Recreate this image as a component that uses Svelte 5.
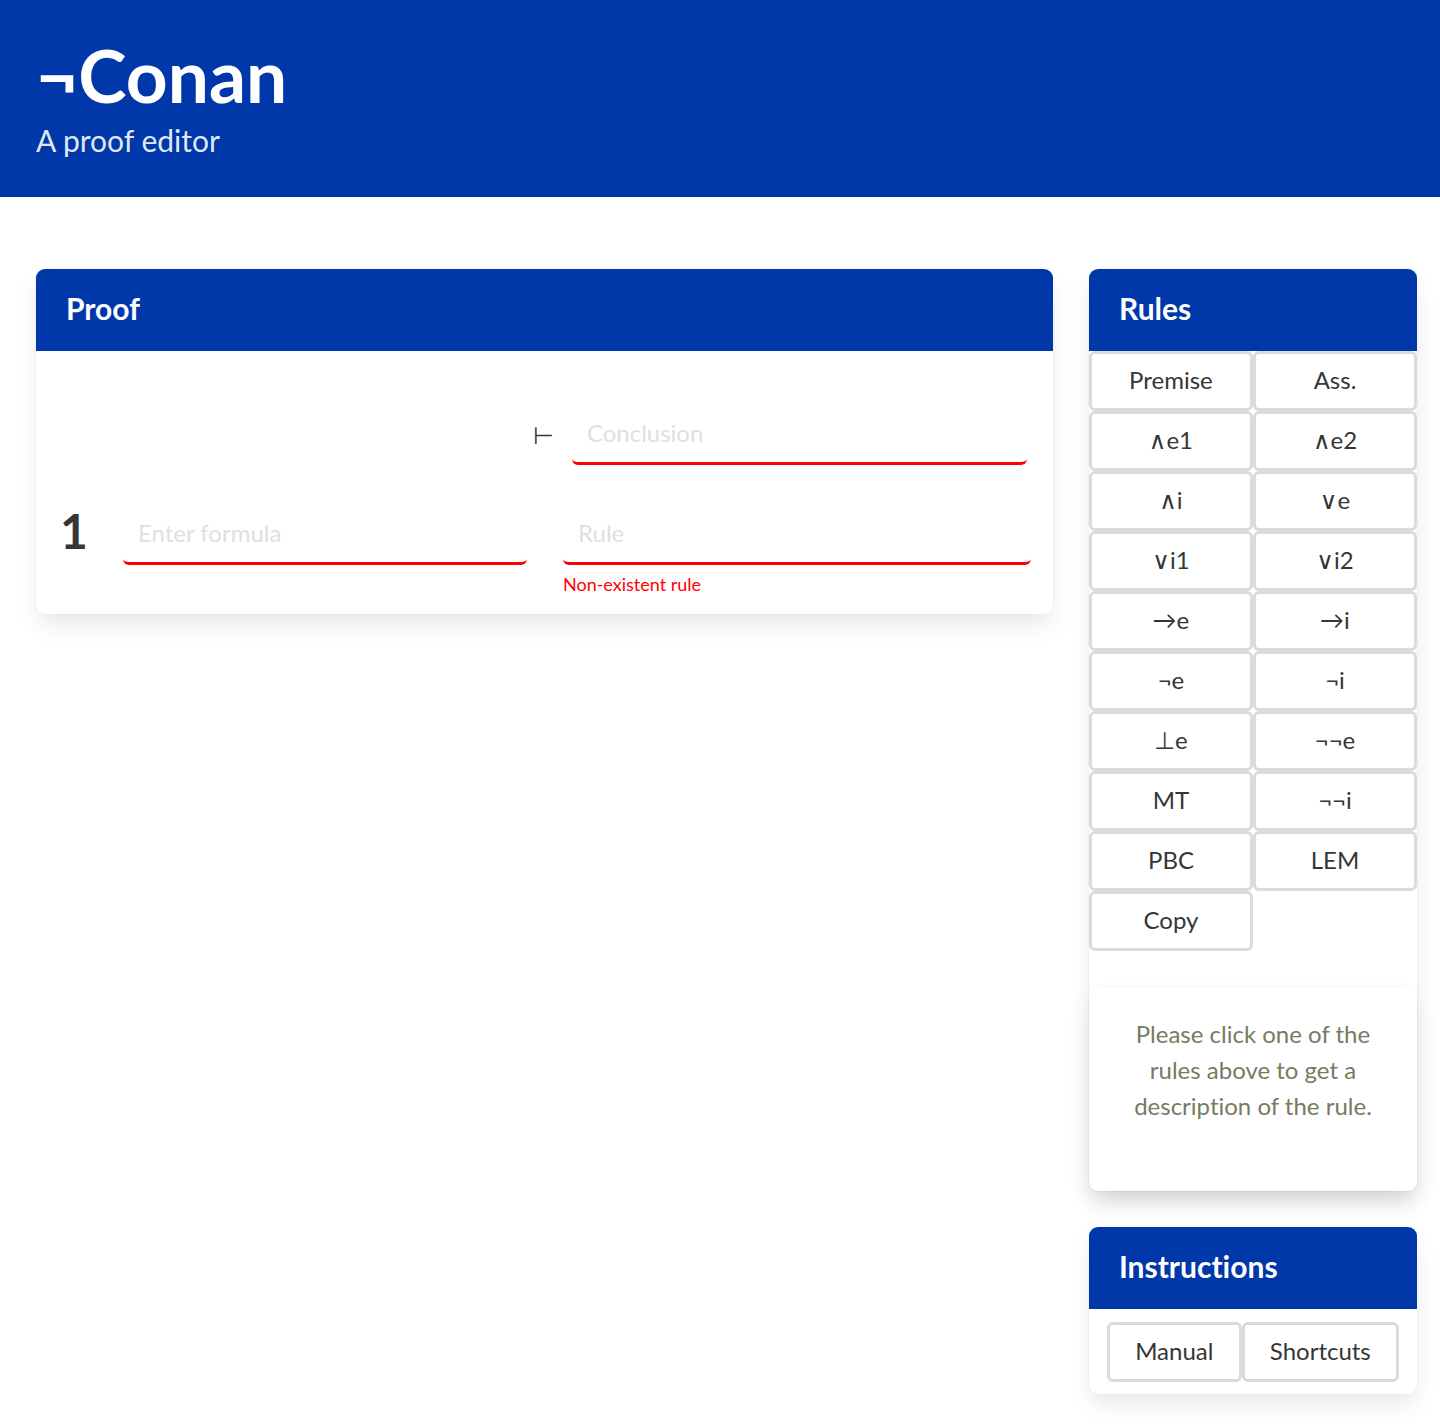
<script>
  const rules = [
    'Premise', 'Ass.',
    '∧e1', '∧e2',
    '∧i', '∨e',
    '∨i1', '∨i2',
    '→e', '→i',
    '¬e', '¬i',
    '⊥e', '¬¬e',
    'MT', '¬¬i',
    'PBC', 'LEM',
    'Copy'
  ];

  let conclusion = $state('');
  let steps = $state([{ formula: '', rule: '' }]);
</script>

<header class="hero">
  <h1>¬Conan</h1>
  <p>A proof editor</p>
</header>

<main>
  <section class="card">
    <h2>Proof</h2>
    <div class="proof">
      <div class="sequent">
        <div class="premises"></div>
        <span class="turnstile">⊢</span>
        <input type="text" placeholder="Conclusion" aria-label="Conclusion" bind:value={conclusion} />
      </div>
      {#each steps as step, i}
        <div class="step">
          <span class="number">{i + 1}</span>
          <input type="text" placeholder="Enter formula" aria-label="Formula {i + 1}" bind:value={step.formula} />
          <div class="rule">
            <input type="text" placeholder="Rule" aria-label="Rule {i + 1}" bind:value={step.rule} />
            <p class="error">Non-existent rule</p>
          </div>
        </div>
      {/each}
    </div>
  </section>

  <aside>
    <section class="card">
      <h2>Rules</h2>
      <div class="rules">
        {#each rules as rule}
          <button type="button">{rule}</button>
        {/each}
      </div>
      <div class="card description">
        <p>Please click one of the rules above to get a description of the rule.</p>
      </div>
    </section>

    <section class="card">
      <h2>Instructions</h2>
      <div class="actions">
        <button type="button">Manual</button>
        <button type="button">Shortcuts</button>
      </div>
    </section>
  </aside>
</main>

<style>
  :global(body) {
    background: #fff;
    color: #363636;
    font-family: Lato, "DejaVu Sans", sans-serif;
    font-size: 24px;
    font-variant-ligatures: none;
    line-height: 36px;
  }

  h1, h2, p {
    margin: 0;
  }

  .hero {
    padding: 35px 36px 38px;
    background: #0038a9;
    color: #fff;
  }

  .hero h1 {
    margin-bottom: 5px;
    font-size: 73px;
    font-weight: 700;
    line-height: 81px;
  }

  .hero p {
    font-size: 30px;
    font-weight: 400;
    line-height: 38px;
    color: rgba(255, 255, 255, 0.9);
  }

  main {
    display: grid;
    grid-template-columns: 3.1fr 1fr;
    align-items: start;
    gap: 36px;
    padding: 72px 23px 31px 36px;
  }

  aside {
    display: grid;
    gap: 36px;
  }

  .card {
    border-radius: 9px;
    background: #fff;
    box-shadow: 0 12px 24px -3px rgba(10, 10, 10, 0.1), 0 0 0 1px rgba(10, 10, 10, 0.02);
  }

  h2 {
    padding: 17px 30px 20px;
    border-radius: 9px 9px 0 0;
    background: #0038a9;
    color: #fff;
    font-size: 30px;
    font-weight: 700;
    line-height: 45px;
  }

  .proof {
    padding: 54px 22px 15px 24px;
  }

  .sequent {
    display: grid;
    grid-template-columns: 1fr auto 1fr;
    align-items: center;
    gap: 18px;
    padding-right: 4px;
    margin-bottom: 40px;
  }

  .turnstile {
    text-align: center;
  }

  input {
    box-sizing: border-box;
    width: 100%;
    min-width: 0;
    height: 60px;
    padding: 0 15px 2px;
    border: 0;
    border-bottom: 3px solid #f00;
    border-radius: 6px;
    background: transparent;
    color: #363636;
    font: inherit;
  }

  input::placeholder {
    color: #e0e0e0;
    opacity: 1;
  }

  .step {
    display: grid;
    grid-template-columns: 27px 404fr 468fr;
    align-items: start;
    gap: 36px;
  }

  .number {
    font-size: 48px;
    font-weight: 700;
    line-height: 52px;
  }

  .error {
    padding: 6px 0 1px;
    color: #f00;
    font-size: 18px;
    line-height: 27px;
  }

  .rules {
    display: grid;
    grid-template-columns: 1fr 1fr;
  }

  button {
    box-sizing: border-box;
    height: 60px;
    padding: 0 24px 2px;
    border: 3px solid #dbdbdb;
    border-radius: 6px;
    background: #fff;
    color: #363636;
    font: inherit;
    text-align: center;
    cursor: pointer;
  }

  .description {
    margin-top: 36px;
    padding: 29px 30px 67px;
    color: #787a62;
    text-align: center;
  }

  .actions {
    display: flex;
    padding: 13px 18px 12px;
  }

  .actions button {
    flex: 1 1 auto;
  }
</style>
